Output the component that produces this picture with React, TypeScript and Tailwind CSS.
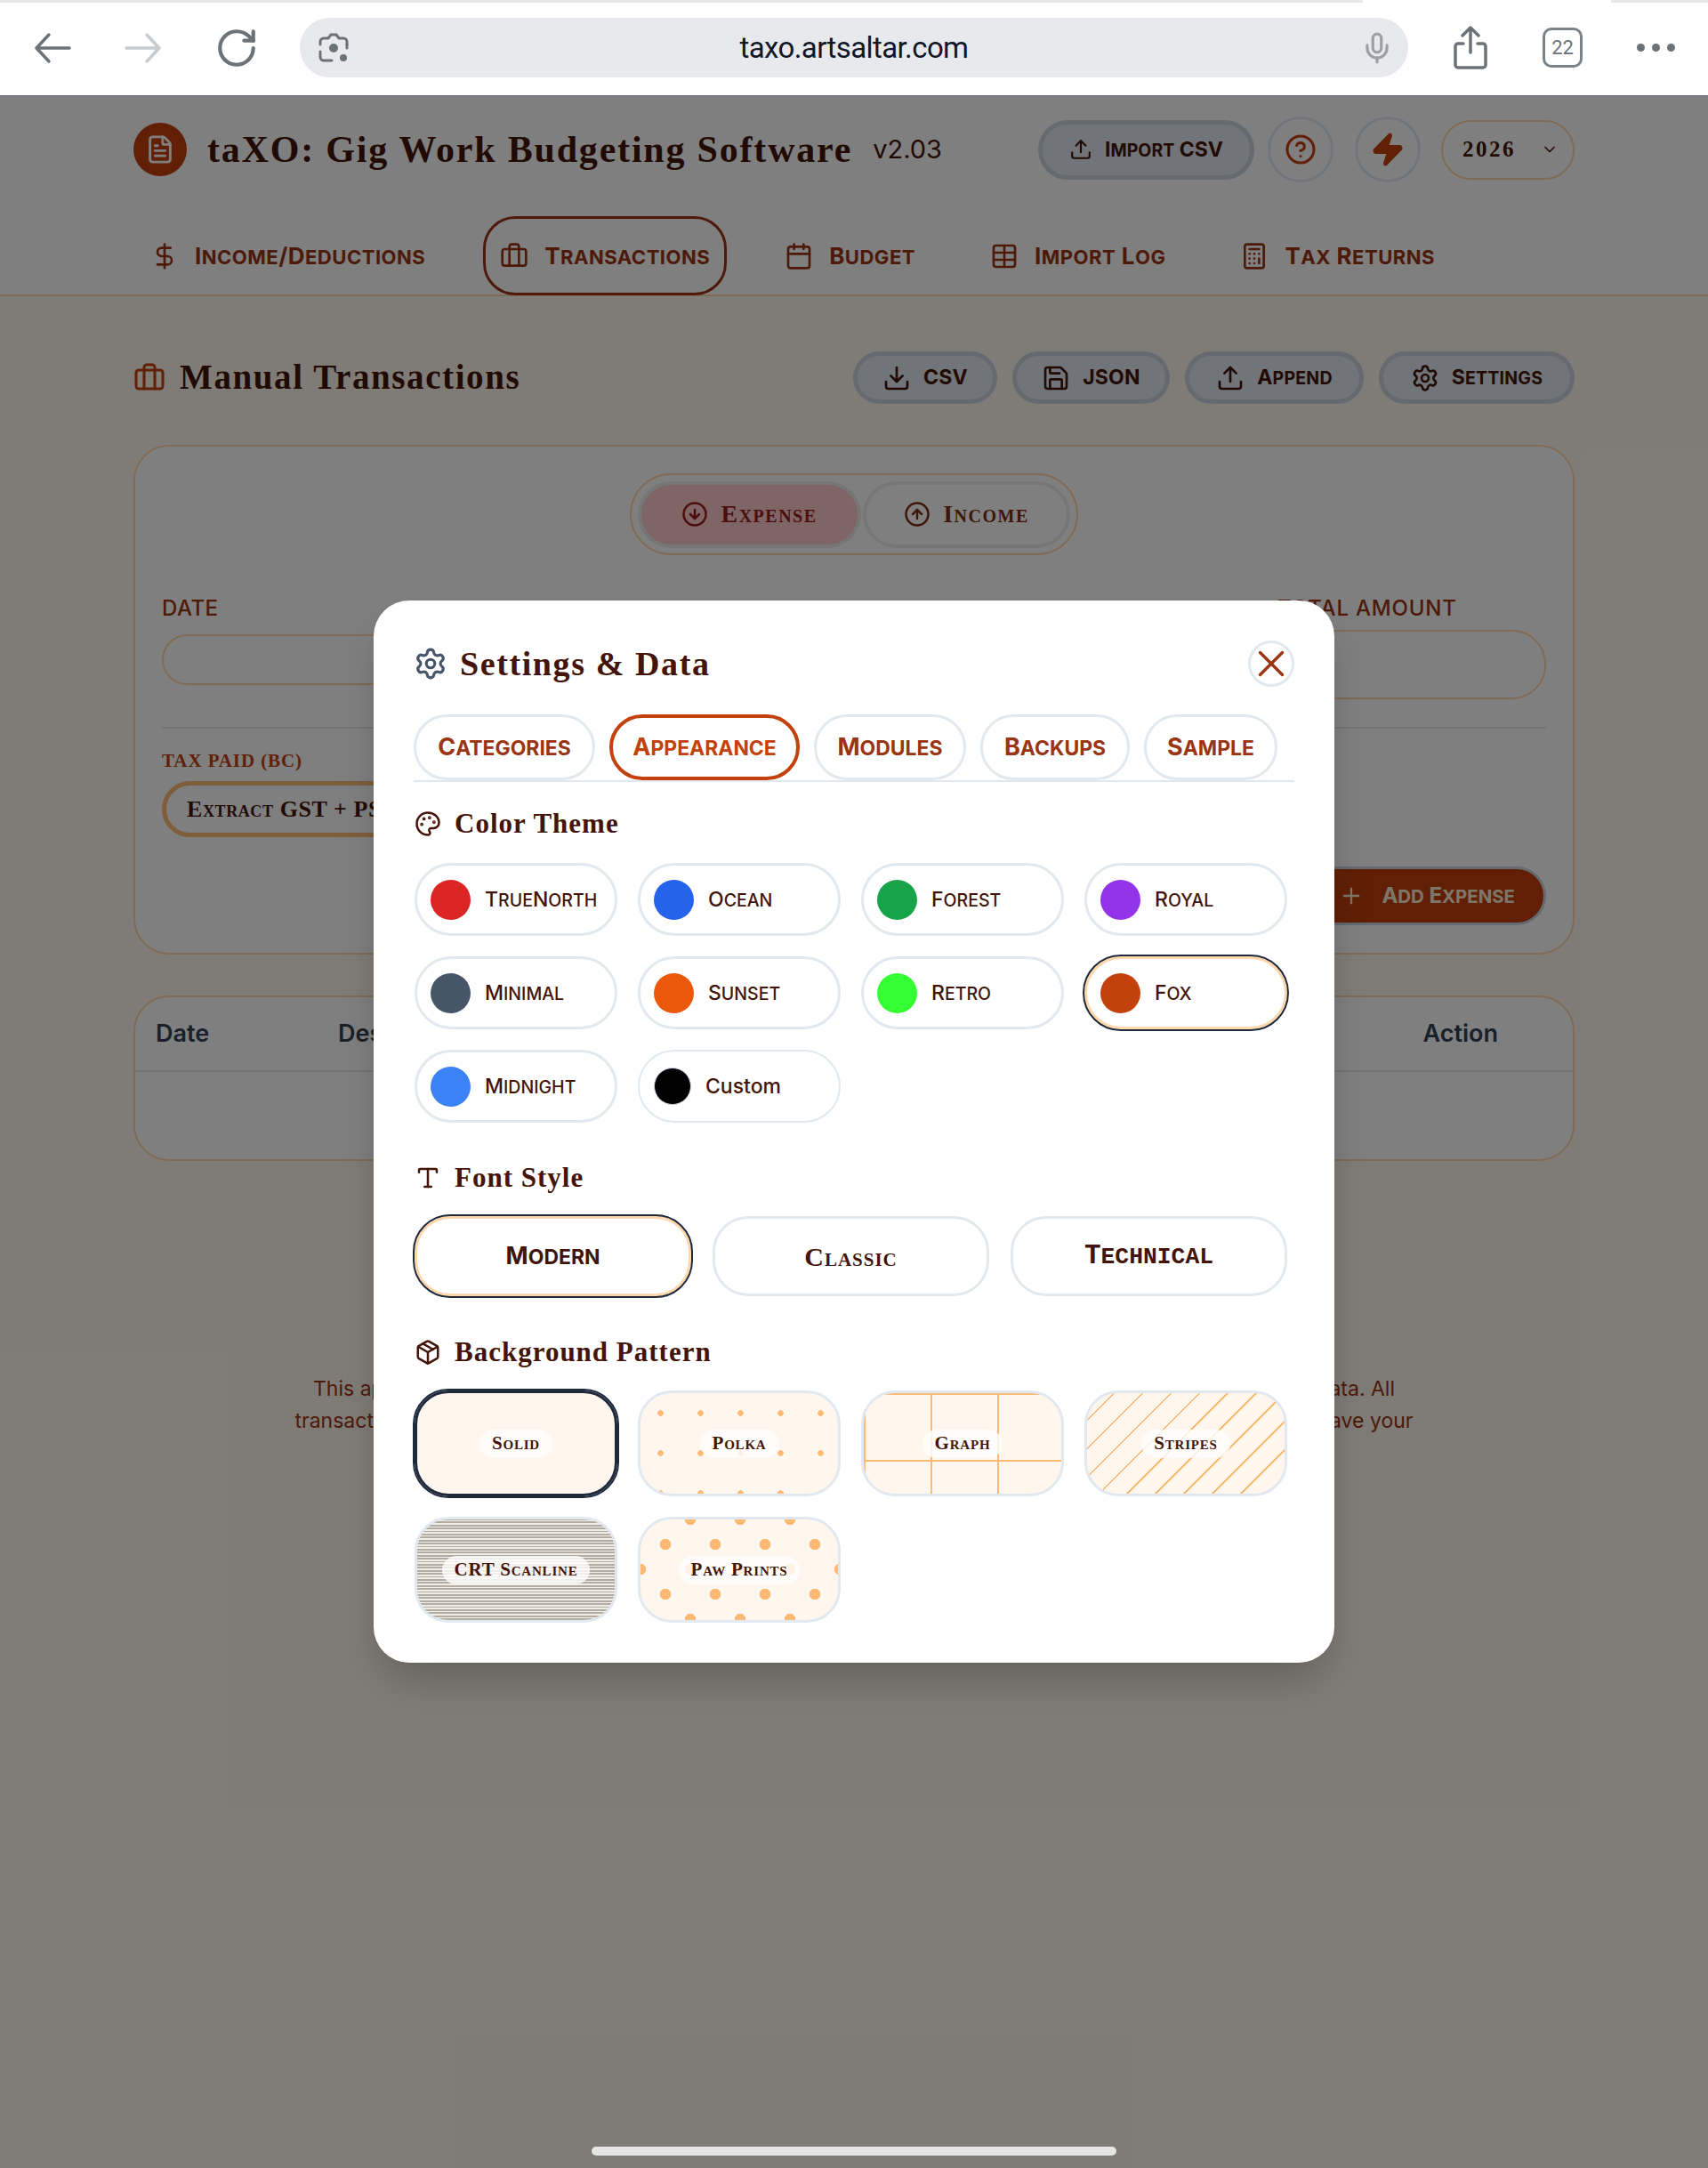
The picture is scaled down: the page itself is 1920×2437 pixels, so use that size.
import { RotateCw, Mic, FileText, Upload, CircleHelp, Zap, ChevronDown, DollarSign, Briefcase, Calendar, Table, Calculator, Download, Save, Settings, CircleArrowDown, CircleArrowUp, Plus, X, Palette, Type, Package } from "lucide-react";

const SERIF = "font-['Liberation_Serif',serif]";
const CAPS = "[font-variant-caps:small-caps]";

function SC({ t }: { t: string }) {
  const parts = t.split(/([a-z]+)/);
  return (
    <>
      {parts.map((p, i) =>
        i % 2 === 1 ? (
          <span key={i} className="text-[0.85em] uppercase">{p}</span>
        ) : (
          <span key={i}>{p}</span>
        )
      )}
    </>
  );
}

function Chrome() {
  return (
    <div className="h-[108px] bg-white border-b border-gray-500 relative flex items-center">
      <div className="absolute top-0 left-0 h-[3px] w-[1532px] bg-gray-200" />
      <div className="absolute top-0 right-0 h-[3px] w-[109px] bg-gray-200" />
      <div className="flex items-center pl-[38px] gap-[60px] w-[337px] text-[#6b7378]">
        <svg viewBox="0 0 42 36" className="w-[42px] h-[36px]" fill="none" stroke="currentColor" strokeWidth="3.5" strokeLinecap="round" strokeLinejoin="round">
          <path d="M40 18H3M17 3L3 18l14 15" />
        </svg>
        <svg viewBox="0 0 42 36" className="w-[42px] h-[36px] text-[#c8ccce]" fill="none" stroke="currentColor" strokeWidth="3.5" strokeLinecap="round" strokeLinejoin="round">
          <path d="M2 18h37M25 3l14 15-14 15" />
        </svg>
        <RotateCw className="w-[50px] h-[50px] -ml-[1px]" strokeWidth={2} />
      </div>
      <div className="w-[1246px] h-[67px] rounded-full bg-[#e8e9ec] flex items-center justify-between px-[20px]">
        <div className="w-[60px]">
          <svg viewBox="0 0 36 36" className="w-[36px] h-[36px] text-[#6b7378]" fill="none" stroke="currentColor" strokeWidth="3" strokeLinecap="round">
            <path d="M3 14v-3a4 4 0 0 1 4-4h5l3-4h6l3 4h5a4 4 0 0 1 4 4v3" />
            <path d="M3 22v6a4 4 0 0 0 4 4h9" />
            <path d="M33 14v4" />
            <circle cx="18" cy="18" r="5" fill="currentColor" stroke="none" />
            <circle cx="29" cy="29" r="4" fill="currentColor" stroke="none" />
          </svg>
        </div>
        <span className="font-['Roboto',sans-serif] text-[33px] text-gray-900 tracking-[-0.6px]">taxo.artsaltar.com</span>
        <div className="w-[60px] flex justify-end">
          <Mic className="w-[38px] h-[38px] text-[#9aa0a4] -mr-[4px]" strokeWidth={2} />
        </div>
      </div>
      <div className="flex items-center text-[#6b7378] pl-[50px] gap-[61px]">
        <svg viewBox="0 0 40 50" className="w-[40px] h-[50px]" fill="none" stroke="currentColor" strokeWidth="3.5" strokeLinecap="round" strokeLinejoin="round">
          <path d="M20 30V3M11 11l9-9 9 9" />
          <path d="M12 20H6a3 3 0 0 0-3 3v21a3 3 0 0 0 3 3h28a3 3 0 0 0 3-3V23a3 3 0 0 0-3-3h-6" />
        </svg>
        <div className="w-[45px] h-[45px] border-[3.5px] border-[#7b8388] rounded-[10px] flex items-center justify-center text-[22px] font-['Roboto',sans-serif]">22</div>
        <div className="flex gap-[8px]">
          <div className="w-[9px] h-[9px] rounded-full bg-[#6b7378]" />
          <div className="w-[9px] h-[9px] rounded-full bg-[#6b7378]" />
          <div className="w-[9px] h-[9px] rounded-full bg-[#6b7378]" />
        </div>
      </div>
    </div>
  );
}

function NavTab({ icon: Icon, label, active }: { icon: any; label: string; active?: boolean }) {
  return (
    <div className={`h-[89px] flex items-center gap-[18px] px-[16px] border-[3px] rounded-[36px] text-[#9a3412] ${active ? "border-[#9a3412]" : "border-transparent"}`}>
      <Icon className="w-[32px] h-[32px]" strokeWidth={2} />
      <span className="text-[26px] font-bold tracking-[0.45px]"><SC t={label} /></span>
    </div>
  );
}

function PageButton({ icon: Icon, label, w }: { icon: any; label: string; w: string }) {
  return (
    <div className={`${w} h-[59px] flex items-center justify-center gap-[14px] rounded-full border-[5px] border-[#cbd5e1] bg-[#e2e8f0] text-[#431407]`}>
      <Icon className="w-[32px] h-[32px]" strokeWidth={2} />
      <span className="text-[23px] font-bold tracking-[0.2px]"><SC t={label} /></span>
    </div>
  );
}

function Page() {
  return (
    <div className="bg-[#fff7ed]">
      <header className="bg-white h-[225px] border-b-2 border-[#fed7aa] px-[150px] pt-[23px]">
        <div className="flex items-center h-[74px]">
          <div className="w-[60px] h-[60px] rounded-full bg-[#c2410c] flex items-center justify-center text-white">
            <FileText className="w-[34px] h-[34px]" strokeWidth={2} />
          </div>
          <h1 className={`${SERIF} ml-[23px] text-[42px] font-bold text-[#431407] tracking-[1.8px]`}>taXO: Gig Work Budgeting Software</h1>
          <span className="ml-[23px] text-[29px] text-[#431407] font-normal">v2.03</span>
          <div className="ml-auto flex items-center">
            <div className="w-[243px] h-[67px] rounded-full border-[5px] border-[#cbd5e1] bg-[#e2e8f0] flex items-center justify-center gap-[14px] text-[#431407]">
              <Upload className="w-[26px] h-[26px]" strokeWidth={2} />
              <span className="text-[23px] font-bold"><SC t="Import CSV" /></span>
            </div>
            <div className="ml-[15px] w-[74px] h-[74px] rounded-full border-[3px] border-[#e2e8f0] bg-white flex items-center justify-center text-[#c2410c]">
              <CircleHelp className="w-[36px] h-[36px]" strokeWidth={2} />
            </div>
            <div className="ml-[24px] w-[74px] h-[74px] rounded-full border-[3px] border-[#e2e8f0] bg-white flex items-center justify-center text-[#c2410c]">
              <Zap className="w-[40px] h-[40px]" fill="currentColor" strokeWidth={2} />
            </div>
            <div className="ml-[23px] w-[150px] h-[67px] rounded-full border-2 border-[#fed7aa] flex items-center pl-[22px] text-[#431407]">
              <span className={`${SERIF} text-[25px] font-bold tracking-[2.5px]`}>2026</span>
              <ChevronDown className="ml-[28px] w-[20px] h-[20px]" strokeWidth={2} />
            </div>
          </div>
        </div>
        <nav className="mt-[38px] flex gap-[46px]">
          <NavTab icon={DollarSign} label="Income/Deductions" />
          <NavTab icon={Briefcase} label="Transactions" active />
          <NavTab icon={Calendar} label="Budget" />
          <NavTab icon={Table} label="Import Log" />
          <NavTab icon={Calculator} label="Tax Returns" />
        </nav>
      </header>
      <main className="px-[150px] pt-[62px] h-[2104px]">
        <div className="flex items-center h-[59px]">
          <Briefcase className="w-[36px] h-[36px] text-[#c2410c]" strokeWidth={2} />
          <h2 className={`${SERIF} ml-[16px] text-[39px] font-bold text-[#431407] tracking-[1.6px]`}>Manual Transactions</h2>
          <div className="ml-auto flex gap-[17px]">
            <PageButton icon={Download} label="CSV" w="w-[162px]" />
            <PageButton icon={Save} label="JSON" w="w-[177px]" />
            <PageButton icon={Upload} label="Append" w="w-[201px]" />
            <PageButton icon={Settings} label="Settings" w="w-[220px]" />
          </div>
        </div>

        <section className="mt-[46px] h-[573px] rounded-[40px] border-2 border-[#fed7aa] bg-white px-[30px] pt-[30px]">
          <div className="mx-auto w-[504px] h-[92px] rounded-[46px] border-2 border-[#fed7aa] flex items-center px-[7px] gap-[2px]">
            <div className={`${SERIF} w-[251px] h-[75px] rounded-full border-4 border-[#ecedf0] bg-[#fecaca] flex items-center justify-center gap-[14px] text-[#991b1b] text-[28px] font-bold ${CAPS} tracking-[1.5px]`}>
              <CircleArrowDown className="w-[30px] h-[30px]" strokeWidth={2} />
              Expense
            </div>
            <div className={`${SERIF} w-[233px] h-[75px] rounded-full border-4 border-[#ecedf0] flex items-center justify-center gap-[14px] text-[#7c2d12] text-[28px] font-bold ${CAPS} tracking-[1.5px]`}>
              <CircleArrowUp className="w-[30px] h-[30px]" strokeWidth={2} />
              Income
            </div>
          </div>
          <div className="mt-[45px] flex justify-between items-start">
            <div className="w-[560px]">
              <div className="text-[24px] font-medium text-[#9a3412] leading-[30px] tracking-[0.5px]">DATE</div>
              <div className="mt-[14px] h-[57px] rounded-full border-2 border-[#fed7aa]" />
            </div>
            <div className="w-[302px]">
              <div className="text-[24px] font-medium text-[#9a3412] leading-[30px] tracking-[0.8px]">TOTAL AMOUNT</div>
              <div className="mt-[9px] h-[78px] rounded-[38px] border-2 border-[#fed7aa]" />
            </div>
          </div>
          <div className="mt-[31px] border-t-2 border-[#e2e8f0]" />
          <div className={`${SERIF} mt-[23px] text-[21px] font-bold text-[#c2410c] leading-[26px] tracking-[0.9px]`}>TAX PAID (BC)</div>
          <div className={`${SERIF} mt-[10px] w-[560px] h-[63px] rounded-full border-[5px] border-[#fdba74] flex items-center pl-[23px] text-[26px] font-bold text-[#431407] ${CAPS} tracking-[0.6px]`}>Extract GST + PST</div>
          <div className="mt-[33px] flex justify-end">
            <div className="w-[340px] h-[66px] rounded-full bg-[#c2410c] border-[3px] border-[#cbd5e1] flex items-center justify-end pr-[32px] gap-[20px] text-[#ffedd5]">
              <Plus className="w-[28px] h-[28px]" strokeWidth={2} />
              <span className="text-[24px] font-bold"><SC t="Add Expense" /></span>
            </div>
          </div>
        </section>

        <section className="mt-[46px] h-[186px] rounded-[40px] border-2 border-[#fed7aa] bg-white">
          <div className="h-[84px] border-b-2 border-[#e2e8f0] flex items-center pl-[23px] pr-[84px] text-[27px] font-semibold text-[#334155]">
            <span className="w-[205px]">Date</span>
            <span>Description</span>
            <span className="ml-auto">Action</span>
          </div>
        </section>

        <div className="mt-[238px] text-[23px] leading-[36px] text-[#9a3412]">
          <div className="mx-auto w-[1216px] flex justify-between">
            <span>This application stores</span>
            <span>your own data. All</span>
          </div>
          <div className="mx-auto w-[1257px] flex justify-between">
            <span>transactions remain</span>
            <span>so save your</span>
          </div>
        </div>
      </main>
    </div>
  );
}

function SectionHead({ icon: Icon, label }: { icon: any; label: string }) {
  return (
    <div className="h-[36px] flex items-center">
      <Icon className="w-[30px] h-[30px] text-[#431407]" strokeWidth={2} />
      <span className={`${SERIF} ml-[15px] text-[31px] font-bold text-[#431407] tracking-[1px]`}>{label}</span>
    </div>
  );
}

function ThemeButton({ color, label, active }: { color: string; label: string; active?: boolean }) {
  return (
    <div className={`h-[82px] rounded-[41px] border-[3px] flex items-center pl-[15px] ${active ? "border-[#fed7aa] outline-2 outline-[#1e293b]" : "border-[#e2e8f0]"}`}>
      <div className={`w-[45px] h-[45px] rounded-full ${color}`} />
      <span className="ml-[16px] text-[23px] font-medium text-[#431407]"><SC t={label} /></span>
    </div>
  );
}

function FontButton({ children, font, active }: { children: any; font: string; active?: boolean }) {
  return (
    <div className={`h-[90px] rounded-[40px] border-[3px] flex items-center justify-center font-bold text-[#431407] ${font} ${active ? "border-[#fed7aa] outline-2 outline-[#1e293b]" : "border-[#e2e8f0]"}`}>
      {children}
    </div>
  );
}

function PatternCard({ label, pattern, active }: { label: string; pattern: string; active?: boolean }) {
  return (
    <div className={`h-[119px] rounded-[38px] bg-[#fff7ed] flex items-center justify-center ${pattern} ${active ? "border-[3px] border-[#1e293b] outline-2 outline-[#1e293b]" : "border-[3px] border-[#e2e8f0]"}`}>
      <span className={`${SERIF} h-[32px] px-[14px] rounded-full bg-white/80 flex items-center text-[21px] font-bold text-[#431407] ${CAPS} tracking-[0.8px]`}>{label}</span>
    </div>
  );
}

function Modal() {
  return (
    <div className="absolute left-0 right-0 top-[108px] bottom-0 bg-black/50 flex justify-center items-start pt-[567px]">
      <div className="w-[1080px] rounded-[40px] bg-white shadow-2xl px-[45px] pt-[45px] pb-[45px] font-['Inter',sans-serif]">
        <div className="flex items-center h-[52px]">
          <Settings className="w-[38px] h-[38px] text-[#475569]" strokeWidth={2} />
          <span className={`${SERIF} ml-[14px] text-[38px] font-bold text-[#431407] tracking-[1.6px]`}>Settings &amp; Data</span>
          <div className="ml-auto w-[52px] h-[52px] rounded-full border-[3px] border-[#e2e8f0] flex items-center justify-center text-[#9a3412]">
            <X className="w-[50px] h-[50px] shrink-0" strokeWidth={1.6} />
          </div>
        </div>
        <div className="mt-[31px] h-[76px] border-b-2 border-[#e2e8f0] flex gap-[16px]">
          {[["Categories", "w-[204px]"], ["Appearance", "w-[214px]"], ["Modules", "w-[171px]"], ["Backups", "w-[168px]"], ["Sample", "w-[150px]"]].map(([l, w]) => {
            const on = l === "Appearance";
            return (
              <div key={l} className={`${w} h-[74px] rounded-[37px] flex items-center justify-center text-[27px] font-bold ${on ? "border-4 border-[#c2410c] text-[#c2410c]" : "border-[3px] border-[#e2e8f0] text-[#9a3412]"}`}><span><SC t={l} /></span></div>
            );
          })}
        </div>
        <div className="mt-[29px] pl-[1px]">
          <SectionHead icon={Palette} label="Color Theme" />
          <div className="mt-[26px] grid grid-cols-4 gap-[23px] w-[981px]">
            <ThemeButton color="bg-[#dc2626]" label="TrueNorth" />
            <ThemeButton color="bg-[#2563eb]" label="Ocean" />
            <ThemeButton color="bg-[#16a34a]" label="Forest" />
            <ThemeButton color="bg-[#9333ea]" label="Royal" />
            <ThemeButton color="bg-[#475569]" label="Minimal" />
            <ThemeButton color="bg-[#ea580c]" label="Sunset" />
            <ThemeButton color="bg-[#33ff33]" label="Retro" />
            <ThemeButton color="bg-[#c2410c]" label="Fox" active />
            <ThemeButton color="bg-[#3b82f6]" label="Midnight" />
            <div className="h-[82px] rounded-[41px] border-2 border-[#e2e8f0] flex items-center pl-[16px]">
              <div className="w-[42px] h-[42px] rounded-full bg-black border border-[#cbd5e1]" />
              <span className="ml-[16px] text-[23px] font-medium text-[#431407]">Custom</span>
            </div>
          </div>
          <div className="mt-[44px]"><SectionHead icon={Type} label="Font Style" /></div>
          <div className="mt-[25px] grid grid-cols-3 gap-[24px] w-[981px]">
            <FontButton font="font-['Inter',sans-serif] text-[27px]" active><span><SC t="Modern" /></span></FontButton>
            <FontButton font={`${SERIF} text-[30px] tracking-[1px] ${CAPS}`}>Classic</FontButton>
            <FontButton font="font-['Liberation_Mono',monospace] text-[31px]"><span><SC t="Technical" /></span></FontButton>
          </div>
          <div className="mt-[45px]"><SectionHead icon={Package} label="Background Pattern" /></div>
          <div className="mt-[25px] grid grid-cols-4 gap-[23px] w-[981px]">
            <PatternCard label="Solid" pattern="" active />
            <PatternCard label="Polka" pattern="bg-[radial-gradient(#fdba74_3px,transparent_3.5px)] bg-[length:45px_45px]" />
            <PatternCard label="Graph" pattern="bg-[linear-gradient(to_right,#fdba74_2px,transparent_2px),linear-gradient(to_bottom,#fdba74_2px,transparent_2px)] bg-[length:75px_75px]" />
            <PatternCard label="Stripes" pattern="bg-[repeating-linear-gradient(135deg,transparent_0,transparent_20.6px,#fdba74_20.6px,#fdba74_22.6px)]" />
            <PatternCard label="CRT Scanline" pattern="bg-[repeating-linear-gradient(0deg,#b3aca3_0,#b3aca3_1.7px,#f0ece6_1.7px,#f0ece6_3.4px)]" />
            <PatternCard label="Paw Prints" pattern="bg-[radial-gradient(#fdba74_6px,transparent_6.5px),radial-gradient(#fdba74_6px,transparent_6.5px)] bg-[length:56px_56px] bg-[position:0_0,28px_28px]" />
          </div>
        </div>
      </div>
    </div>
  );
}

export default function App() {
  return (
    <div className="relative w-[1920px] h-[2437px] overflow-hidden font-['Inter',sans-serif]">
      <Chrome />
      <Page />
      <Modal />
      <div className="absolute left-[665px] top-[2413px] w-[590px] h-[10px] rounded-full bg-[#e5e5e5]" />
    </div>
  );
}
